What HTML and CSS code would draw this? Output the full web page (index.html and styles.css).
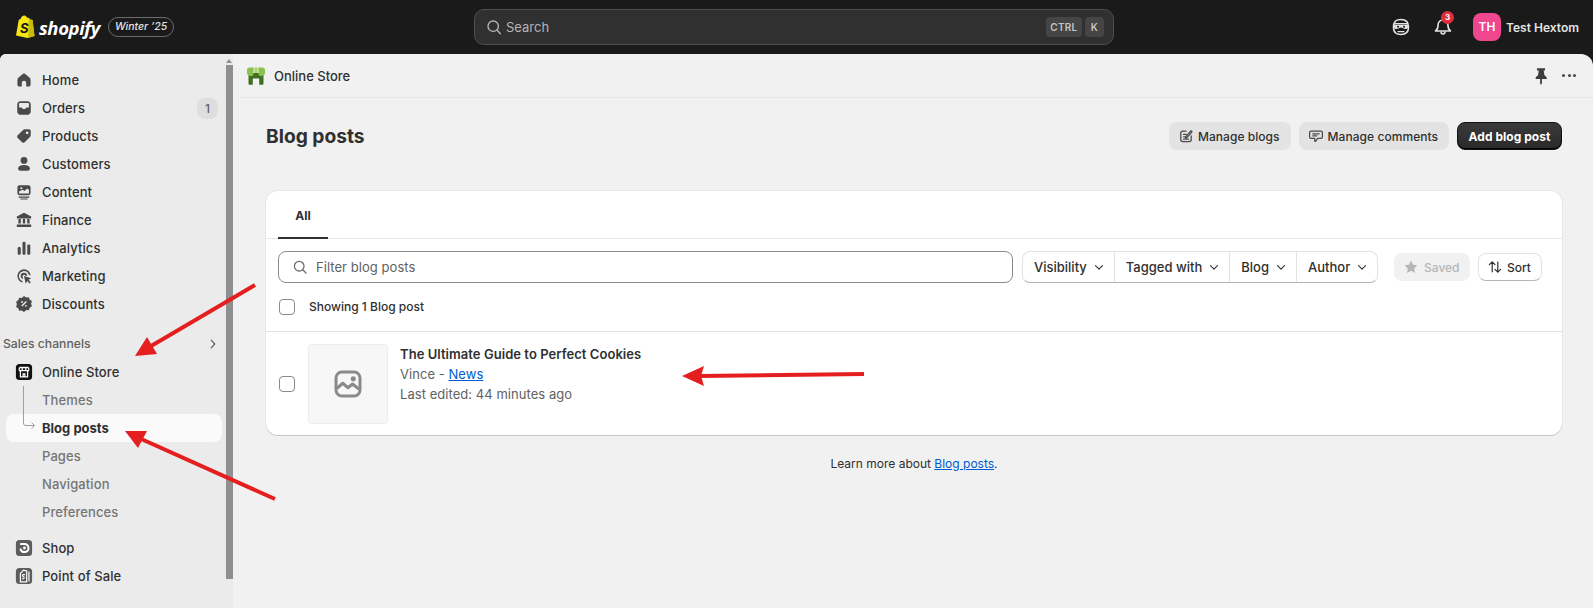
FILE: index.html
```html
<!DOCTYPE html>
<html lang="en">
<head>
<meta charset="utf-8">
<title>Blog posts</title>
<link rel="stylesheet" href="styles.css">
</head>
<body>
<header class="topbar">
  <div class="brand">
    <svg class="bag" viewBox="0 0 20 24"><path fill="#f5e614" d="M1 20.500 3.600 5.600c.2-.8 1-1.400 2-1.600C6.200 2 7.600.6 9.300.6c.8 0 1.300.4 1.600 1 .5 0 1 .4 1.300 1.300l1-.3L15 4.400l2.500.5L19.500 21 12.500 23z"/><path fill="#c9bb0c" d="m14 2.500 1 2 2.500.4 2 16.100-6.500 2z"/><text x="5" y="18" class="bag-s">S</text></svg>
    <span class="wordmark">shopify</span>
    <span class="edition">Winter ’25</span>
  </div>
  <div class="search">
    <svg class="ico-16" viewBox="0 0 20 20" fill="none" stroke="#b5b5b5" stroke-width="1.700"><circle cx="9" cy="9" r="6.500"/><path d="m14 14 4 4.500" stroke-linecap="round"/></svg>
    <span class="search-label">Search</span>
    <span class="kbd kbd-ctrl">CTRL</span>
    <span class="kbd">K</span>
  </div>
  <div class="account">
    <svg class="pirate" viewBox="0 0 20 20"><path fill="none" stroke="#e3e3e3" stroke-width="1.600" d="M10 2.500c4.500 0 7.500 1.500 7.500 7.500s-3 7.500-7.500 7.500-7.500-1.500-7.500-7.500 3-7.500 7.500-7.500z"/><path fill="#e3e3e3" d="M3 6h14v1.500h-14zM3 8h14v1.500c0 2-1 2.500-2.500 2.500-2 0-3-1.500-4.500-1.500S7.500 12 5.500 12C4 12 3 11.500 3 9.500zM6.500 14h7v1.300h-7z"/><circle cx="7" cy="9.800" r="1" fill="#1a1a1a"/><circle cx="13" cy="9.800" r="1" fill="#1a1a1a"/></svg>
    <div class="bell">
      <svg viewBox="0 0 20 20" fill="none" stroke="#e3e3e3" stroke-width="1.600" stroke-linejoin="round"><path d="M10 3c-3 0-5 2.500-5 5.500 0 3-1 4.500-2.500 5.500h15c-1.500-1-2.500-2.500-2.500-5.500C15 5.500 13 3 10 3z"/><path d="M8 14.500c0 1.500.8 2.500 2 2.500s2-1 2-2.500"/></svg>
      <span class="bell-count">3</span>
    </div>
    <span class="avatar">TH</span>
    <span class="user">Test Hextom</span>
  </div>
</header>

<div class="body-row">
  <aside class="sidebar">
    <nav class="nav">
      <a class="nav-item"><svg class="ico" viewBox="0 0 20 20"><path d="M10 2.800c-.5 0-1 .2-1.400.5L4 7.200c-.9.700-1.300 1.600-1.300 2.700v5.300c0 1.200 1 2 2 2H7.500v-4a2.500 2.500 0 0 1 5 0v4h2.800c1 0 2-.8 2-2V9.900c0-1.100-.4-2-1.300-2.700l-4.600-3.900c-.4-.3-.9-.5-1.400-.5z"/></svg>Home</a>
      <a class="nav-item"><svg class="ico" viewBox="0 0 20 20"><path fill-rule="evenodd" d="M6 2.500h8c2 0 3.500 1.500 3.500 3.500v8c0 2-1.500 3.500-3.500 3.500H6c-2 0-3.500-1.500-3.500-3.500V6C2.500 4 4 2.500 6 2.500zm-1.500 7V6C4.500 5 5 4.500 6 4.500h8c1 0 1.500.5 1.500 1.500v3.500H13c-.6 0-1 .4-1.200 1l-.3.500h-3l-.3-.5c-.2-.6-.6-1-1.200-1z"/></svg>Orders<span class="count">1</span></a>
      <a class="nav-item"><svg class="ico" viewBox="0 0 20 20"><path fill-rule="evenodd" d="M11 2.500h4.500c1.100 0 2 .9 2 2V9c0 .8-.3 1.500-.8 2l-6 6c-.8.800-2 .8-2.800 0l-4.900-4.900c-.8-.8-.8-2 0-2.800l6-6c.5-.5 1.200-.8 2-.8zM13.500 8a1.500 1.500 0 1 0 0-3 1.500 1.500 0 0 0 0 3z"/></svg>Products</a>
      <a class="nav-item"><svg class="ico" viewBox="0 0 20 20"><circle cx="10" cy="6" r="3.800"/><path d="M3.500 15c0-2.500 2.500-4 6.500-4s6.500 1.500 6.500 4c0 1.500-1 2.500-2.500 2.500H6c-1.500 0-2.500-1-2.500-2.500z"/></svg>Customers</a>
      <a class="nav-item"><svg class="ico" viewBox="0 0 20 20"><path fill-rule="evenodd" d="M5 2.500h10c1.300 0 2.300 1 2.300 2.300v6.400c0 1.300-1 2.300-2.300 2.300H5c-1.300 0-2.300-1-2.300-2.300V4.800c0-1.300 1-2.300 2.300-2.300zM4.500 9.500v1.500c0 .5.300.7.700.7h9.600c.4 0 .7-.2.700-.7V7.500l-2-1.500-3 3-2-1.500zM7 7a1.200 1.200 0 1 0 0-2.400A1.200 1.200 0 0 0 7 7zM4 15h12v1.500H4zM6 17.200h8v1H6z"/></svg>Content</a>
      <a class="nav-item"><svg class="ico" viewBox="0 0 20 20"><path d="M10 2 2 6v2.200h16V6zM3.800 9h2.700v5H3.800zM8.700 9h2.600v5H8.700zM13.500 9h2.700v5h-2.700zM2 15h16v2.800H2z"/></svg>Finance</a>
      <a class="nav-item"><svg class="ico" viewBox="0 0 20 20"><rect x="3" y="9" width="3.400" height="8.500" rx="1.300"/><rect x="8.300" y="3" width="3.400" height="14.500" rx="1.300"/><rect x="13.600" y="6" width="3.400" height="11.500" rx="1.300"/></svg>Analytics</a>
      <a class="nav-item"><svg class="ico" viewBox="0 0 20 20"><path d="M10 2.500a7.500 7.500 0 0 0-1.500 14.800l-.4-1.900A5.600 5.600 0 1 1 15.500 9l1.900.2A7.500 7.500 0 0 0 10 2.500z"/><path d="M10 6.500a3.500 3.500 0 0 0-1 6.900l-.4-2A1.600 1.600 0 1 1 11.600 9.600l2 .2A3.600 3.600 0 0 0 10 6.500z"/><path d="m10 10 8 2.500-3 1.700 2.500 2.800-1.200 1.200-2.700-2.700-1.700 3z"/></svg>Marketing</a>
      <a class="nav-item"><svg class="ico" viewBox="0 0 20 20"><path fill-rule="evenodd" d="M10 1 12.500 2.700l2.900-.2 1 2.700 2.400 1.600-.9 2.900.9 2.900-2.400 1.600-1 2.700-2.900-.2L10 19l-2.500-1.700-2.900.2-1-2.700-2.400-1.600.9-2.900-.9-2.900 2.400-1.600 1-2.700 2.900.2zM12 6.800l-5 5 1.100 1.100 5-5zM7.800 8.800a1 1 0 1 0 0-2 1 1 0 0 0 0 2zM12.200 13a1 1 0 1 0 0-2 1 1 0 0 0 0 2z"/></svg>Discounts</a>

      <div class="nav-section">Sales channels
        <svg class="section-chevron" viewBox="0 0 20 20" fill="none" stroke="#616161" stroke-width="1.700" stroke-linecap="round" stroke-linejoin="round"><path d="m7.500 4.500 5 5.500-5 5.500"/></svg>
      </div>
      <a class="nav-item"><svg class="ico" viewBox="0 0 20 20"><rect x="1" y="1" width="18" height="18" rx="4" fill="#111"/><path fill="none" stroke="#fff" stroke-width="1.400" d="M5 5h10M4.500 8.500h11M6 8.500V15.500h8V8.500M9 15.500V12h2v3.500M5 5l-.5 3.500M15 5l.5 3.500M8 5v3.500M12 5v3.500"/></svg>Online Store</a>
      <div class="subnav">
        <svg class="tree" viewBox="0 0 14 44" fill="none" stroke="#a0a0a0" stroke-width="1"><path d="M1.500 0v37c0 1.800 1 2.500 2.500 2.500h8.500M9.500 36.500l3 3-3 3"/></svg>
        <a class="sub-item">Themes</a>
        <a class="sub-item sub-active">Blog posts</a>
        <a class="sub-item">Pages</a>
        <a class="sub-item">Navigation</a>
        <a class="sub-item">Preferences</a>
      </div>
      <div class="nav-apps">
        <a class="nav-item"><svg class="ico" viewBox="0 0 20 20"><rect x="1" y="1" width="18" height="18" rx="4" fill="#5c5c5c"/><path fill="none" stroke="#fff" stroke-width="2.200" stroke-linecap="round" d="M6.500 5.500h4a4.500 4.500 0 1 1-4.300 6"/><circle cx="10.500" cy="10" r="1.600" fill="#fff"/></svg>Shop</a>
        <a class="nav-item"><svg class="ico" viewBox="0 0 20 20"><rect x="1" y="1" width="18" height="18" rx="4" fill="#5c5c5c"/><path fill="none" stroke="#fff" stroke-width="1.300" d="M6 7 9.500 3.500 13 4.500V16.500H6zM15.500 5v11"/><path fill="none" stroke="#fff" stroke-width="1.200" d="M11 8.500H9c-.8 0-.8 2 0 2h.5c.8 0 .8 2.500 0 2.500H7.800"/></svg>Point of Sale</a>
      </div>
    </nav>
    <div class="scrollbar">
      <span class="scroll-up"></span>
      <span class="scroll-thumb"></span>
    </div>
  </aside>

  <main class="main">
    <div class="appbar">
      <svg class="store-logo" viewBox="0 0 20 20"><path fill="#3f6f1f" d="M2.500 7h15v10.500c0 .8-.5 1.300-1.300 1.300h-3V12.500H6.800v6.300h-3c-.8 0-1.300-.5-1.300-1.300z"/><path fill="#8cc152" d="M3.500 1.500h4.200L7.500 8c-.1 1.400-1 2-2.700 2C3 10 1.500 9 1 7.500L1 4c0-1.500 1-2.500 2.500-2.500zM12.300 1.500h4.200C18 1.500 19 2.500 19 4v3.500C18.500 9 17 10 15.200 10c-1.700 0-2.600-.6-2.700-2z"/><path fill="#a6d66a" d="M8.500 1.500h3L11.500 7H8.500z"/></svg>
      <span class="appbar-title">Online Store</span>
      <svg class="pin" viewBox="0 0 20 20"><path fill="#3d3d3d" d="M5.500 1.500h9v2.300h-1.500l.8 5.500c1.700.8 2.700 2.200 2.700 3.900H11v5l-1 1.500-1-1.500v-5H4c0-1.700 1-3.100 2.700-3.900l.8-5.500H5.500z"/></svg>
      <span class="dots"><i></i><i></i><i></i></span>
    </div>

    <div class="content">
      <div class="page-head">
        <h1 class="page-title">Blog posts</h1>
        <div class="page-actions">
          <button class="btn btn-grey"><svg class="ico-btn" viewBox="0 0 20 20" fill="none" stroke="#4a4a4a" stroke-width="1.600" stroke-linecap="round" stroke-linejoin="round"><path d="M10 4H6C4.500 4 3.500 5 3.500 6.500v8c0 1.500 1 2.500 2.500 2.500h8c1.500 0 2.500-1 2.500-2.500V10M7 8h3M7 11h2.500M7 14h6M10 10.500 16 3.500l1.500 1.300-6 7-2 .5z"/></svg>Manage blogs</button>
          <button class="btn btn-grey"><svg class="ico-btn" viewBox="0 0 20 20" fill="none" stroke="#4a4a4a" stroke-width="1.600" stroke-linecap="round" stroke-linejoin="round"><path d="M4 4h12c1.200 0 2 .8 2 2v5c0 1.200-.8 2-2 2h-3.500c-1 0-1 2-3 3.500-.5.400-1 .2-1-.5V13H4c-1.200 0-2-.8-2-2V6c0-1.200.8-2 2-2zM6 7.300h8M6 9.800h5"/></svg>Manage comments</button>
          <button class="btn btn-primary">Add blog post</button>
        </div>
      </div>

      <section class="card">
        <div class="tabs"><span class="tab">All</span></div>
        <div class="filters">
          <div class="filter-input">
            <svg class="ico-16" viewBox="0 0 20 20" fill="none" stroke="#6b6b6b" stroke-width="1.600"><circle cx="9" cy="9" r="6"/><path d="m13.500 13.500 4 4" stroke-linecap="round"/></svg>
            <span>Filter blog posts</span>
          </div>
          <div class="filter-group">
            <span class="filter">Visibility<svg class="chev" viewBox="0 0 20 20"><path d="m5 8 5 5 5-5"/></svg></span>
            <span class="filter">Tagged with<svg class="chev" viewBox="0 0 20 20"><path d="m5 8 5 5 5-5"/></svg></span>
            <span class="filter">Blog<svg class="chev" viewBox="0 0 20 20"><path d="m5 8 5 5 5-5"/></svg></span>
            <span class="filter">Author<svg class="chev" viewBox="0 0 20 20"><path d="m5 8 5 5 5-5"/></svg></span>
          </div>
          <span class="saved"><svg class="ico-star" viewBox="0 0 20 20"><path fill="#b5b5b5" d="m10 2 2.500 5.200 5.500.7-4 3.900 1 5.700-5-2.700-5 2.700 1-5.700-4-3.900 5.500-.7z"/></svg>Saved</span>
          <span class="sort"><svg class="ico-sort" viewBox="0 0 20 20" fill="none" stroke="#303030" stroke-width="1.500" stroke-linecap="round" stroke-linejoin="round"><path d="M6.500 16V3.500M3 7l3.500-3.500L10 7M13.500 4v12.500M10 13l3.500 3.500L17 13"/></svg>Sort</span>
        </div>
        <div class="select-row">
          <span class="check"></span>
          <span class="showing">Showing 1 Blog post</span>
        </div>
        <div class="post-row">
          <span class="check"></span>
          <div class="thumb">
            <svg viewBox="0 0 20 20" fill="none" stroke="#8a8a8a" stroke-width="2"><rect x="2" y="2" width="16" height="16" rx="4"/><path d="m2.500 13 4-3.500 3.500 3 3-2.500 4.500 3.500" stroke-linejoin="round"/><circle cx="13.500" cy="6.500" r="1.700" fill="#8a8a8a" stroke="none"/></svg>
          </div>
          <div class="post-text">
            <div class="post-title">The Ultimate Guide to Perfect Cookies</div>
            <div class="post-meta">Vince - <a class="link">News</a></div>
            <div class="post-meta">Last edited: 44 minutes ago</div>
          </div>
        </div>
      </section>

      <p class="learn">Learn more about <a class="link">Blog posts</a>.</p>
    </div>
  </main>
</div>

<svg class="arrows" viewBox="0 0 1593 608">
  <g fill="#e51f1f" stroke="#e51f1f">
    <path stroke-width="4" d="M255 285 146 349"/>
    <path stroke="none" d="m135 356 12-19 10 17z"/>
    <path stroke-width="4" d="M275 499 139 438"/>
    <path stroke="none" d="m125 431 22 0-9 17z"/>
    <path stroke-width="4" d="M864 374 698 376"/>
    <path stroke="none" d="m682 376 22-10-3 10 3 10z"/>
  </g>
</svg>
</body>
</html>
```

FILE: styles.css
```css
* { box-sizing: border-box; }
html, body { margin: 0; height: 608px; overflow: hidden; }
body {
  position: relative;
  background: #1a1a1a;
  font-family: Inter, "Liberation Sans", sans-serif;
  font-size: 13px;
  color: #303030;
  display: flex;
  flex-direction: column;
}

/* top bar */
.topbar { height: 54px; flex: none; display: flex; align-items: center; position: relative; padding: 0 14px 0 15px; }
.brand { display: flex; align-items: center; width: 459px; }
.bag { width: 20px; height: 24px; flex: none; }
.bag-s { font: italic 700 13px Inter, sans-serif; fill: #1a1a1a; }
.wordmark { font: italic 700 18.500px "Open Sans", sans-serif; color: #fff; margin-left: 4px; letter-spacing: -.4px; }
.edition { margin-left: 8px; height: 20px; padding: 0 6px; border: 1px solid #6b6b6b; border-radius: 10px; font-style: italic; font-weight: 500; font-size: 10.500px; line-height: 18px; color: #e3e3e3; white-space: nowrap; }

.search { width: 640px; height: 36px; display: flex; align-items: center; gap: 4px; padding: 0 9px 0 11px; background: #303030; border: 1px solid #4f4f4f; border-radius: 10px; color: #b5b5b5; }
.search-label { flex: 1; font-size: 13px; }
.kbd { height: 20px; padding: 0 6px; border-radius: 4px; background: #454545; color: #c4c4c4; font-size: 10px; font-weight: 600; line-height: 20px; letter-spacing: .2px; }
.kbd-ctrl { margin-right: -1px; padding: 0 4.500px; }
.ico-16 { width: 16px; height: 16px; flex: none; }

.account { margin-left: auto; display: flex; align-items: center; }
.pirate { width: 20px; height: 20px; }
.bell { position: relative; width: 20px; height: 20px; margin-left: 22px; }
.bell svg { width: 20px; height: 20px; display: block; }
.bell-count { position: absolute; left: 8px; top: -6px; width: 13px; height: 13px; border-radius: 50%; background: #e02d3c; color: #fff; font-size: 8px; font-weight: 700; line-height: 13px; text-align: center; }
.avatar { width: 28px; height: 28px; margin-left: 20px; border-radius: 8px; background: #f0468e; color: #fff; font-size: 12px; font-weight: 600; line-height: 28px; text-align: center; }
.user { margin-left: 5px; font-size: 12px; font-weight: 600; color: #e3e3e3; white-space: nowrap; }

/* layout */
.body-row { flex: 1; display: flex; min-height: 0; background: #f1f1f1; border-radius: 6px 12px 0 0; overflow: hidden; }

/* sidebar */
.sidebar { width: 233px; flex: none; display: flex; background: #ebebeb; }
.nav { width: 225px; flex: none; padding: 12px 0 0 0; }
.nav-item { height: 28px; display: flex; align-items: center; padding: 0 7px 0 15px; font-weight: 500; color: #303030; letter-spacing: .1px; }
.ico { width: 18px; height: 18px; flex: none; margin-right: 9px; fill: #4a4a4a; }
.count { margin-left: auto; width: 21px; height: 21px; border-radius: 8px; background: #dedede; color: #616161; font-size: 12px; line-height: 21px; text-align: center; }
.nav-section { height: 28px; margin-top: 12px; padding: 0 5px 2px 3px; display: flex; align-items: center; justify-content: space-between; font-size: 12.200px; font-weight: 500; color: #616161; }
.section-chevron { width: 14px; height: 14px; margin-top: 2px; }
.subnav { position: relative; }
.tree { position: absolute; left: 22px; top: 0; width: 14px; height: 44px; }
.sub-item { display: flex; align-items: center; height: 28px; margin: 0 3px 0 6px; padding-left: 36px; border-radius: 8px; font-weight: 500; color: #757575; letter-spacing: .1px; }
.sub-active { background: #fafafa; color: #303030; font-weight: 700; letter-spacing: 0; }
.nav-apps { margin-top: 8px; }

.scrollbar { width: 8px; flex: none; display: flex; flex-direction: column; align-items: center; padding-top: 5px; }
.scroll-up { width: 0; height: 0; border: 3px solid transparent; border-top: 0; border-bottom: 4px solid #8f8f8f; margin-bottom: 2px; }
.scroll-thumb { width: 7px; height: 514px; background: #8f8f8f; }

/* main */
.main { flex: 1; min-width: 0; display: flex; flex-direction: column; }
.appbar { height: 44px; flex: none; display: flex; align-items: center; padding: 0 14px 0 13px; border-bottom: 1px solid #e6e6e6; margin-left: 7px; }
.store-logo { width: 20px; height: 20px; margin-left: -7px; }
.appbar-title { margin-left: 8px; font-size: 13px; font-weight: 450; color: #303030; }
.pin { width: 18px; height: 18px; margin-left: auto; }
.dots { display: flex; gap: 2.500px; margin-left: 12px; margin-right: 3px; }
.dots i { width: 3px; height: 3px; border-radius: 50%; background: #4a4a4a; }

.content { padding: 24px 31px 0 33px; }
.page-head { display: flex; align-items: center; justify-content: space-between; height: 28px; }
.page-title { margin: 0; font-size: 19.200px; font-weight: 700; color: #303030; }
.page-actions { display: flex; gap: 8px; }
.btn { height: 28px; border: 0; border-radius: 8px; padding: 0 11px 0 9px; display: flex; align-items: center; gap: 4px; font: 500 12px Inter, sans-serif; letter-spacing: .05px; color: #303030; }
.btn-grey { background: #e3e3e3; }
.btn-primary { padding: 0 10.500px; background: linear-gradient(#3a3a3a, #2a2a2a); color: #fff; font-weight: 700; border: 1px solid #111; box-shadow: inset 0 -1px 0 #000; }
.ico-btn { width: 16px; height: 16px; flex: none; }

/* card */
.card { margin-top: 41px; height: 244px; background: #fff; border-radius: 12px; box-shadow: 0 1px 0 #c8c8c8, 0 0 0 1px #e8e8e8; }
.tabs { height: 48px; padding-left: 12px; border-bottom: 1px solid #e6e6e6; }
.tab { display: block; width: 50px; height: 48px; border-bottom: 2px solid #303030; text-align: center; font-weight: 700; font-size: 12px; line-height: 50px; color: #303030; }
.filters { display: flex; align-items: center; height: 32px; margin-top: 12px; padding: 0 20px 0 12px; }
.filter-input { width: 735px; height: 32px; display: flex; align-items: center; gap: 8px; padding-left: 13px; border: 1px solid #8a8a8a; border-radius: 8px; color: #616161; font-size: 13px; letter-spacing: .05px; }
.filter-group { margin-left: 9px; display: flex; height: 32px; border-radius: 8px; border: 1px solid #e3e3e3; border-bottom-color: #b5b5b5; }
.filter { display: flex; align-items: center; gap: 5px; padding: 0 8px 0 11px; border-left: 1px solid #e3e3e3; font-weight: 500; color: #303030; white-space: nowrap; }
.filter:first-child { border-left: 0; }
.chev { width: 14px; height: 14px; fill: none; stroke: #303030; stroke-width: 1.600; stroke-linecap: round; stroke-linejoin: round; }
.saved { margin-left: auto; width: 76px; height: 28px; display: flex; align-items: center; gap: 5px; padding-left: 9px; border-radius: 8px; background: #f1f1f1; color: #b5b5b5; font-size: 12px; font-weight: 500; }
.ico-star { width: 16px; height: 16px; }
.sort { margin-left: 8px; width: 64px; height: 28px; display: flex; align-items: center; gap: 4px; padding-left: 8px; border-radius: 8px; border: 1px solid #e3e3e3; border-bottom-color: #b5b5b5; font-size: 12px; font-weight: 500; }
.ico-sort { width: 16px; height: 16px; }
.select-row { height: 49px; padding: 0 0 0 13px; display: flex; align-items: center; gap: 14px; border-bottom: 1px solid #e3e3e3; font-size: 12px; font-weight: 500; }
.showing { margin-top: -2px; }
.check { width: 16px; height: 16px; flex: none; border: 1px solid #8a8a8a; border-radius: 4px; background: #fff; }
.post-row { display: flex; align-items: center; padding: 12px 0 0 13px; }
.thumb { width: 80px; height: 80px; margin-left: 13px; display: flex; align-items: center; justify-content: center; background: #f7f7f7; border: 1px solid #ededed; border-radius: 4px; }
.thumb svg { width: 30px; height: 30px; }
.post-text { margin-left: 12px; line-height: 20px; margin-top: -21px; }
.post-title { font-weight: 600; font-size: 13px; color: #303030; letter-spacing: .05px; }
.post-meta { color: #616161; font-size: 13px; letter-spacing: .05px; }
.link { color: #005bd3; text-decoration: underline; }
.learn { margin: 19px 0 0; text-align: center; font-size: 12px; line-height: 20px; }

.arrows { position: absolute; left: 0; top: 0; width: 1593px; height: 608px; pointer-events: none; }
```
